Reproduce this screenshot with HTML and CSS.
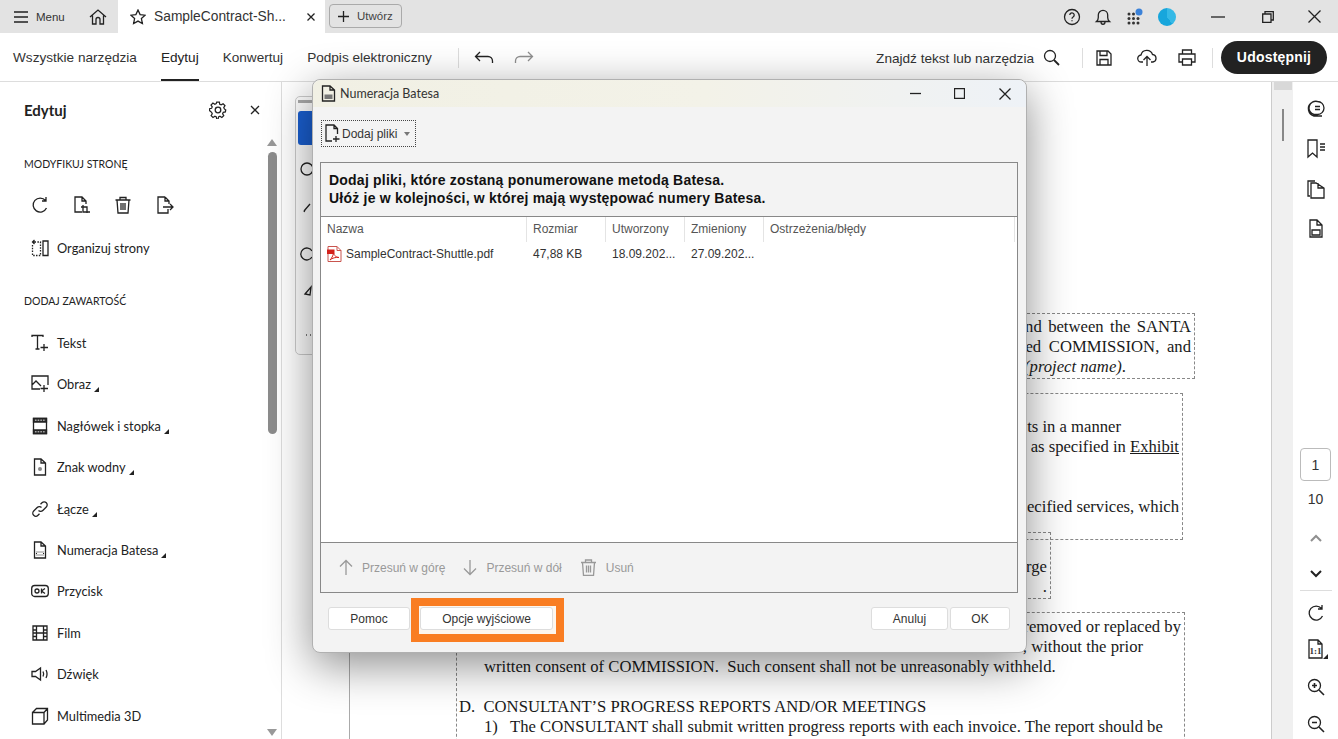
FILE: index.html
```html
<!DOCTYPE html>
<html lang="pl">
<head>
<meta charset="utf-8">
<title>Numeracja Batesa</title>
<link rel="stylesheet" href="styles.css">
</head>
<body>
<div class="app">
  <header class="topbar">
    <div class="menu">
      <svg class="ic" width="16" height="14" viewBox="0 0 16 14"><path d="M1 2h14M1 7h14M1 12h14"/></svg>
      <span>Menu</span>
    </div>
    <svg class="ic home" width="18" height="18" viewBox="0 0 18 18"><path d="M1 9 9 2l8 7M3.500 7.500V16h3.500v-4.500a2 2 0 0 1 4 0V16h3.500V7.500"/></svg>
    <div class="tab">
      <svg class="ic" width="16" height="16" viewBox="0 0 16 16"><path d="m8 1 2.100 4.600 5 .6-3.700 3.400 1 5L8 12.100 3.600 14.600l1-5L.9 6.200l5-.6z"/></svg>
      <span class="tab-name">SampleContract-Sh...</span>
      <svg class="ic" width="10" height="10" viewBox="0 0 10 10"><path d="m1.500 1.500 7 7M8.500 1.500l-7 7"/></svg>
    </div>
    <div class="create">
      <svg class="ic" width="11" height="11" viewBox="0 0 11 11"><path d="M5.500 0v11M0 5.500h11"/></svg>
      <span>Utwórz</span>
    </div>
    <div class="top-right">
      <svg class="ic" width="18" height="18" viewBox="0 0 18 18"><circle cx="9" cy="9" r="7.500"/><path d="M6.800 7a2.200 2.200 0 1 1 3.300 2c-.8.500-1.100.9-1.100 1.700M9 12.200v1"/></svg>
      <svg class="ic" width="18" height="18" viewBox="0 0 18 18"><path d="M2.500 13.500c1.200-1 1.800-2 1.800-4V7a4.700 4.700 0 0 1 9.400 0v2.500c0 2 .6 3 1.800 4zM7 14c0 3 4 3 4 0"/></svg>
      <svg class="apps" width="18" height="18" viewBox="0 0 18 18"><g fill="#333"><circle cx="3" cy="6" r="1.500"/><circle cx="7.500" cy="6" r="1.500"/><circle cx="3" cy="10.500" r="1.500"/><circle cx="7.500" cy="10.500" r="1.500"/><circle cx="12" cy="10.500" r="1.500"/><circle cx="3" cy="15" r="1.500"/><circle cx="7.500" cy="15" r="1.500"/><circle cx="12" cy="15" r="1.500"/></g><circle cx="13" cy="4" r="3.500" fill="#3b82d9"/></svg>
      <span class="avatar"></span>
      <svg class="ic win-min" width="14" height="14" viewBox="0 0 14 14"><path d="M0 7h14"/></svg>
      <svg class="ic win-max" width="12" height="12" viewBox="0 0 12 12"><path d="M.7 3h8.300v8.300H.7zM3 3V.7h8.300V9H9"/></svg>
      <svg class="ic win-close" width="13" height="13" viewBox="0 0 13 13"><path d="m.5.500 12 12M12.500.500l-12 12"/></svg>
    </div>
  </header>

  <nav class="toolbar">
    <a class="tool">Wszystkie narzędzia</a>
    <a class="tool active">Edytuj</a>
    <a class="tool">Konwertuj</a>
    <a class="tool">Podpis elektroniczny</a>
    <span class="vsep first"></span>
    <svg class="ic undo" width="20" height="14" viewBox="0 0 20 14"><path d="M6 1 1.500 5.500 6 10M1.500 5.500H14a4.500 4.500 0 0 1 4.500 4.500v2"/></svg>
    <svg class="ic redo" width="20" height="14" viewBox="0 0 20 14"><path d="M14 1l4.500 4.500L14 10M18.500 5.500H6A4.500 4.500 0 0 0 1.500 10v2"/></svg>
    <div class="tool-right">
      <span class="find">Znajdź tekst lub narzędzia</span>
      <svg class="ic search" width="17" height="17" viewBox="0 0 17 17"><circle cx="7" cy="7" r="5.500"/><path d="m11 11 5 5" stroke-width="1.800"/></svg>
      <span class="vsep s2"></span>
      <svg class="ic save" width="16" height="16" viewBox="0 0 16 16"><path d="M1 1h11l3 3v11H1zM4 1v4.500h7V1M4 15V9.500h8V15"/></svg>
      <svg class="ic upload" width="20" height="18" viewBox="0 0 20 18"><path d="M6 13H4.500a3.500 3.500 0 0 1-.5-7 6 6 0 0 1 11.500-.5 3.800 3.800 0 0 1 .5 7.500h-2M10 17V8M6.500 11 10 7.500l3.500 3.500"/></svg>
      <svg class="ic print" width="18" height="17" viewBox="0 0 18 17"><path d="M4.500 5V1h9v4M4.500 13H1V5h16v8h-3.500M4.500 10h9v6h-9z"/></svg>
      <span class="vsep s3"></span>
      <button class="share">Udostępnij</button>
    </div>
  </nav>

  <main class="workspace">
    <aside class="panel">
      <div class="panel-head">
        <h2>Edytuj</h2>
        <svg class="ic gear" width="18" height="18" viewBox="0 0 18 18"><circle cx="9" cy="9" r="2.800"/><path d="M7.600 1h2.800l.4 2.300 1.500.7 2-1.200 2 2-1.300 2 .7 1.500L17 9.400v-.8l-.3 2.800-2.200.4-.7 1.500 1.200 2-2 2-2-1.300-1.500.7-.4 2.200H7.600l-.4-2.200-1.500-.7-2 1.300-2-2 1.200-2-.7-1.500L0 10v-2l2.200-.4.700-1.500-1.300-2 2-2 2 1.200 1.500-.7z" transform="translate(.5 .1) scale(.95)"/></svg>
        <svg class="ic close-panel" width="10" height="10" viewBox="0 0 10 10"><path d="m1 1 8 8M9 1 1 9"/></svg>
      </div>
      <h3>MODYFIKUJ STRONĘ</h3>
      <div class="page-tools">
        <svg class="ic" width="18" height="18" viewBox="0 0 18 18"><path d="M15.500 12a7 7 0 1 1-1-7.500M15 1v4h-4"/></svg>
        <svg class="ic" width="18" height="18" viewBox="0 0 18 18"><path d="M9 16H2V1h7l4 4v3M9 1v4h4M10 9v7h7M8 11h6v6"/></svg>
        <svg class="ic" width="18" height="18" viewBox="0 0 18 18"><path d="M1.500 4h15M6 4V1.500h6V4M3 4l1 13h10l1-13M7 7v7M9 7v7M11 7v7"/></svg>
        <svg class="ic" width="18" height="18" viewBox="0 0 18 18"><path d="M9 1H2v16h10v-4M9 1l4 4v3M9 1v4h4M7 11h10M14 8l3 3-3 3"/></svg>
      </div>
      <div class="row org">
        <svg class="ic" width="18" height="18" viewBox="0 0 18 18"><path d="M1.500 6v10.500h8V3H6" stroke-dasharray="1.500 1.300"/><path d="M3.500 1 1.500 3l2 2M1.500 3H5"/><path d="M12 2h5v14.500h-5z"/></svg>
        <span>Organizuj strony</span>
      </div>
      <h3 class="second">DODAJ ZAWARTOŚĆ</h3>
      <ul class="items">
        <li class="row"><svg class="ic" width="18" height="18" viewBox="0 0 18 18"><path d="M1 3V1.500h11V3M6.500 1.500V15M4.500 15h4M13 10v7M9.500 13.500H17"/></svg><span>Tekst</span></li>
        <li class="row more"><svg class="ic" width="18" height="18" viewBox="0 0 18 18"><path d="M9 14H1V1h16v9M1 10l4-4 5 5M12 3.500l0 .1M13 10v7M9.500 13.500H17"/></svg><span>Obraz</span></li>
        <li class="row more"><svg class="ic" width="18" height="18" viewBox="0 0 18 18"><path d="M2.500 1.500h13v15h-13z"/><path d="M2.500 1.500h13v3.500h-13zM2.500 13h13v3.500h-13z" fill="#333"/><path d="M4 3.200h10M4 14.800h10" stroke="#ddd" stroke-width="1" stroke-dasharray="1.500 1.200"/></svg><span>Nagłówek i stopka</span></li>
        <li class="row more"><svg class="ic" width="18" height="18" viewBox="0 0 18 18"><path d="M10 1H3.500v16h11V5zM10 1v4h4.500"/><circle cx="9" cy="11" r="2" fill="#888" stroke="none"/></svg><span>Znak wodny</span></li>
        <li class="row more"><svg class="ic" width="18" height="18" viewBox="0 0 18 18"><path d="M7.500 10.500a3 3 0 0 0 4.300 0l3.500-3.500a3 3 0 0 0-4.300-4.300L9.500 4.200M10.500 7.500a3 3 0 0 0-4.300 0L2.700 11a3 3 0 0 0 4.300 4.300l1.500-1.500"/></svg><span>Łącze</span></li>
        <li class="row more"><svg class="ic" width="18" height="18" viewBox="0 0 18 18"><path d="M10 1H3.500v16h11V5zM10 1v4h4.500"/><path d="M5.500 11h7v3h-7z" stroke-width="1" stroke-dasharray="1 1"/></svg><span>Numeracja Batesa</span></li>
        <li class="row"><svg class="ic" width="18" height="18" viewBox="0 0 18 18"><rect x=".7" y="3.500" width="16.600" height="11" rx="3"/><circle cx="6" cy="9" r="2"/><path d="M10.500 6.500v5M14 6.500 10.500 9l3.500 2.500"/></svg><span>Przycisk</span></li>
        <li class="row"><svg class="ic" width="18" height="18" viewBox="0 0 18 18"><path d="M2 2h14v14H2zM5.500 2v14M12.500 2v14M2 6h3.500M2 9h14M2 12.500h3.500M12.500 6H16M12.500 12.500H16"/></svg><span>Film</span></li>
        <li class="row"><svg class="ic" width="18" height="18" viewBox="0 0 18 18"><path d="M1 6.500h3.500L9.500 3v12l-5-3.500H1zM12 6.500c.8 1.500.8 3.500 0 5M15 5c1.300 2.500 1.300 5.500 0 8"/></svg><span>Dźwięk</span></li>
        <li class="row"><svg class="ic" width="18" height="18" viewBox="0 0 18 18"><path d="M1.500 5.500h11.500V17H1.500zM1.500 5.500l4-4h11V13L13 17M13 5.500l3.500-4"/></svg><span>Multimedia 3D</span></li>
      </ul>
      <div class="panel-scroll"><i class="arrow up"></i><b></b><i class="arrow down"></i></div>
    </aside>

    <section class="doc">
      <div class="float-tools">
        <i class="grip"></i>
        <i class="blue"></i>
        <svg class="ic" width="16" height="220" viewBox="0 0 16 220"><circle cx="8" cy="8" r="6"/><path d="m5 50 6-7M5 51l1-2"/><path d="M13 90a6 6 0 1 0 0 6"/><path d="m6 133 6-7-1 8z"/><path d="M7 174h.8M11 174h.8" stroke-width="1.600"/></svg>
      </div>
      <article class="sheet">
        <div class="field f1">
          <p class="spread-a">nd between the SANTA</p>
          <p class="spread">ed COMMISSION, and</p>
          <p class="end-a"><em>(project name)</em>.</p>
        </div>
        <div class="field f2">
          <p class="end-b">ts in a manner</p>
          <p>as specified in <u>Exhibit</u></p>
          <p class="blank"></p>
          <p class="blank"></p>
          <p>ecified services, which</p>
        </div>
        <div class="field f3">
          <p>rge</p>
          <p>.</p>
        </div>
        <div class="field f4">
          <p>removed or replaced by</p>
          <p class="end-c">, without the prior</p>
          <p class="left ind">written consent of COMMISSION.&nbsp; Such consent shall not be unreasonably withheld.</p>
          <p class="blank"></p>
          <p class="left">D.&nbsp; CONSULTANT’S PROGRESS REPORTS AND/OR MEETINGS</p>
          <p class="left ind">1)&nbsp;&nbsp; The CONSULTANT shall submit written progress reports with each invoice. The report should be</p>
        </div>
      </article>
    </section>

    <div class="doc-scroll"><i class="cap"></i><i class="mark"></i></div>

    <aside class="rail">
      <svg class="ic" width="20" height="20" viewBox="0 0 20 20"><path d="M11.500 2.500a6.500 6.500 0 0 1 0 13H8a6.500 6.500 0 0 1 3.500-13zM9 7.500h5M9 10.500h5M5 4a7.500 7.500 0 0 0 3 13h8"/></svg>
      <svg class="ic" width="20" height="20" viewBox="0 0 20 20"><path d="M2 1h9v17l-4.500-4L2 18zM14 5h5M14 8h5M14 11h5"/></svg>
      <svg class="ic" width="20" height="20" viewBox="0 0 20 20"><path d="M4 17H2V2h7M10 4H5v15h13V9zM12 4v5h6"/></svg>
      <svg class="ic" width="20" height="20" viewBox="0 0 20 20"><path d="M11 1H4v17h12V6zM11 1v5h5M6 11h8v5H6z"/></svg>
      <div class="pager">
        <span class="page-box">1</span>
        <span class="page-total">10</span>
        <svg class="ic chev off" width="12" height="8" viewBox="0 0 12 8"><path d="m1 7 5-5 5 5" stroke-width="2"/></svg>
        <svg class="ic chev dn" width="12" height="8" viewBox="0 0 12 8"><path d="m1 1 5 5 5-5" stroke-width="2"/></svg>
        <span class="rule"></span>
        <svg class="ic" width="18" height="18" viewBox="0 0 18 18"><path d="M15.500 12a7 7 0 1 1-1-7.500M15 1v4h-4"/></svg>
        <div class="oneone"><svg class="ic" width="18" height="20" viewBox="0 0 18 20"><path d="M11 1H2v18h13V5zM11 1v4h4"/></svg><span>1:1</span></div>
        <svg class="ic" width="18" height="18" viewBox="0 0 18 18"><circle cx="7.500" cy="7.500" r="6"/><path d="m12 12 5 5M7.500 5v5M5 7.500h5" stroke-width="1.600"/></svg>
        <svg class="ic" width="18" height="18" viewBox="0 0 18 18"><circle cx="7.500" cy="7.500" r="6"/><path d="m12 12 5 5M5 7.500h5" stroke-width="1.600"/></svg>
      </div>
    </aside>
  </main>

  <div class="dialog">
    <div class="dlg-title">
      <svg class="ic" width="15" height="17" viewBox="0 0 15 17"><path d="M9 1H1.500v15h12V5zM9 1v4h4.500" /><path d="M3.500 9.500h8v4.500h-8z" fill="#777" stroke="none"/></svg>
      <span class="dlg-name">Numeracja Batesa</span>
      <svg class="ic d-min" width="11" height="11" viewBox="0 0 11 11"><path d="M0 5.500h11"/></svg>
      <svg class="ic d-max" width="11" height="11" viewBox="0 0 11 11"><path d="M.5.500h10v10H.5z"/></svg>
      <svg class="ic d-close" width="12" height="12" viewBox="0 0 12 12"><path d="m.5.500 11 11M11.500.500l-11 11"/></svg>
    </div>
    <div class="add-row">
      <div class="add-btn">
        <svg class="ic" width="17" height="19" viewBox="0 0 17 19"><path d="M8 17H2V1h8l3.500 3.500V10M10 1v3.500h3.500M12 12v6M9 15h6.500"/></svg>
        <span>Dodaj pliki</span>
        <i class="caret"></i>
      </div>
    </div>
    <div class="dlg-box">
      <div class="intro">
        <p>Dodaj pliki, które zostaną ponumerowane metodą Batesa.</p>
        <p>Ułóż je w kolejności, w której mają występować numery Batesa.</p>
      </div>
      <div class="list">
        <div class="thead">
          <span>Nazwa</span><span>Rozmiar</span><span>Utworzony</span><span>Zmieniony</span><span>Ostrzeżenia/błędy</span>
        </div>
        <div class="tbody">
          <span class="file"><svg width="15" height="16" viewBox="0 0 15 16"><path d="M1 .5h9l4 4v11H1z" fill="#fff" stroke="#c9544e"/><path d="M10 .5v4h4" fill="none" stroke="#c9544e"/><path d="M0 3.500h7.500v4.500H0z" fill="#d3211c"/><path d="M3 14c2-2 4-6 3.500-8.500C6 8 8 11 12 11.500 9 11 5 12 3 14z" fill="none" stroke="#d3211c"/></svg>SampleContract-Shuttle.pdf</span>
          <span>47,88 KB</span><span>18.09.202...</span><span>27.09.202...</span><span></span>
        </div>
      </div>
      <div class="actions">
        <span><svg class="ic" width="14" height="17" viewBox="0 0 14 17"><path d="M7 16V1.500M1 7.500l6-6 6 6"/></svg>Przesuń w górę</span>
        <span><svg class="ic" width="14" height="17" viewBox="0 0 14 17"><path d="M7 1v14.500M1 9.500l6 6 6-6"/></svg>Przesuń w dół</span>
        <span><svg class="ic" width="17" height="17" viewBox="0 0 17 17"><path d="M1 3.500h15M5.500 3.500v-2.500h6v2.500M2.500 3.500l1 13h10l1-13M6.500 6.500v7M8.500 6.500v7M10.500 6.500v7"/></svg>Usuń</span>
      </div>
    </div>
    <div class="dlg-foot">
      <button class="btn help">Pomoc</button>
      <div class="highlight"><button class="btn opts">Opcje wyjściowe</button></div>
      <button class="btn cancel">Anuluj</button>
      <button class="btn ok">OK</button>
    </div>
  </div>
</div>
</body>
</html>
```

FILE: styles.css
```css
* { box-sizing: border-box; }
html, body { margin: 0; height: 100%; overflow: hidden; }
body { font-family: "Liberation Sans", Arial, sans-serif; color: #222; background: #fff; }
p, h2, h3, ul { margin: 0; padding: 0; }
button { font: inherit; }
.ic { fill: none; stroke: #222; stroke-width: 1.3; flex: none; display: block; }

.app { position: relative; width: 1338px; height: 739px; display: flex; flex-direction: column; overflow: hidden; }

/* Top bar */
.topbar { height: 33px; flex: none; background: #e3e3e3; display: flex; align-items: center; position: relative; }
.menu { display: flex; align-items: center; gap: 7px; margin-left: 13px; font-size: 11.5px; color: #333; width: 76px; }
.home { margin-right: 11px; }
.tab { width: 207px; height: 33px; background: #fff; display: flex; align-items: center; padding-left: 12px; font-size: 13.800px; color: #333; }
.tab-name { margin-left: 8px; width: 152px; white-space: nowrap; }
.create { margin-left: 4px; width: 73px; height: 24px; border: 1px solid #aaa; border-radius: 4px; display: flex; align-items: center; gap: 8px; padding-left: 8px; font-size: 11.5px; color: #444; margin-top: -1px; }
.top-right { margin-left: auto; display: flex; align-items: center; gap: 13px; padding-right: 17px; }
.apps { margin-left: 1px; }
.avatar { width: 18px; height: 18px; border-radius: 50%; margin-left: 1px; background: conic-gradient(#35b9e6 0 40%, #17a6dc 40% 100%); background-color: #22aee0; }
.win-min { margin-left: 22px; }
.win-max { margin-left: 24px; }
.win-close { margin-left: 21px; }

/* Tools bar */
.toolbar { height: 49px; flex: none; background: #fff; border-bottom: 1px solid #ddd; display: flex; align-items: stretch; padding-left: 13px; font-size: 13.600px; color: #333; }
.tool { display: flex; align-items: center; margin-right: 24px; height: 48px; padding-top: 3px; border-bottom: 2px solid transparent; white-space: nowrap; }
.tool.active { border-bottom-color: #222; color: #222; }
.vsep { width: 1px; height: 20px; background: #ddd; align-self: center; flex: none; margin-top: 2px; }
.vsep.first { margin-left: 2px; }
.undo { align-self: center; margin: 2px 0 0 15px; }
.redo { align-self: center; margin: 2px 0 0 20px; opacity: .5; }
.tool-right { margin-left: auto; display: flex; align-items: center; padding-right: 11px; }
.tool-right .ic { margin-top: 1px; }
.find { white-space: nowrap; padding-top: 2px; }
.tool-right .search { margin-left: 9px; }
.s2 { margin-left: 22px; }
.tool-right .save { margin-left: 13px; }
.tool-right .upload { margin-left: 25px; }
.tool-right .print { margin-left: 21px; }
.s3 { margin-left: 16px; }
.share { margin-left: 8px; width: 106px; height: 33px; border: 0; border-radius: 17px; background: #222; color: #fff; font-weight: 700; font-size: 14px; letter-spacing: .2px; }

/* Workspace */
.workspace { flex: 1; display: flex; min-height: 0; }
.panel { width: 282px; flex: none; border-right: 1px solid #ddd; position: relative; padding: 0 0 0 24px; font-family: Lato, sans-serif; font-size: 12.800px; color: #222; }
.panel-head { height: 56px; display: flex; align-items: center; }
.panel-head h2 { font-size: 15px; font-weight: 700; width: 185px; }
.close-panel { margin-left: 23px; }
.panel h3 { font-size: 10.500px; font-weight: 400; letter-spacing: 0; color: #222; margin-top: 18px; line-height: 16px; }
.panel h3.second { margin-top: 25px; }
.page-tools { display: flex; gap: 23.500px; margin: 24px 0 0 7px; }
.row { display: flex; align-items: center; gap: 8px; margin-left: 7px; height: 41.400px; list-style: none; position: relative; white-space: nowrap; }
.row.org { margin-top: 13px; }
.items { list-style: none; margin-top: 13px; }
.row.more span::after { content: ""; display: inline-block; width: 0; height: 0; margin-left: 3px; border-style: solid; border-width: 0 0 5px 5px; border-color: transparent transparent #222 transparent; vertical-align: -3px; }
.panel-scroll { position: absolute; right: 4px; top: 57px; bottom: 3px; width: 10px; display: flex; flex-direction: column; align-items: center; }
.panel-scroll b { width: 9px; height: 282px; margin-top: 6px; background: #8c8c8c; border-radius: 5px; }
.arrow { width: 0; height: 0; border-left: 5px solid transparent; border-right: 5px solid transparent; }
.arrow.up { border-bottom: 7px solid #999; }
.arrow.down { border-top: 7px solid #999; margin-top: auto; }

/* Document */
.doc { flex: 1; position: relative; overflow: hidden; background: #fff; font-family: "Liberation Serif", serif; font-size: 16.650px; line-height: 20px; color: #1a1a1a; }
.float-tools { position: absolute; left: 13px; top: 14px; width: 50px; height: 259px; border: 1px solid #ccc; border-radius: 5px; padding: 3px 2px; background: #fff; }
.grip { display: block; width: 40px; height: 3px; background: #aaa; margin-bottom: 8px; }
.blue { display: block; width: 40px; height: 34px; background: #1a5fd0; border-radius: 3px; margin-bottom: 16px; }
.float-tools .ic { margin-left: 1px; }
.sheet { position: absolute; left: 67px; top: 0; bottom: 0; right: 0; border-left: 1px solid #aaa; }
.field { position: absolute; border: 1px dashed #888; text-align: right; white-space: nowrap; }
.field p { min-height: 20px; }
.f1 { left: 107px; top: 231px; width: 738px; height: 66px; padding: 3px 3px 0 0; }
.f2 { left: 107px; top: 311px; width: 726px; height: 147px; padding: 23px 3px 0 0; }
.f3 { left: 107px; top: 450px; width: 594px; height: 67px; padding: 24px 3px 0 0; }
.f4 { left: 106px; top: 530px; width: 729px; height: 140px; padding: 4px 3px 0 2px; }
.spread-a { word-spacing: 2.300px; }
.spread { word-spacing: 3.500px; }
.end-a { padding-right: 65px; }
.end-b { padding-right: 58px; }
.end-c { padding-right: 38px; }
.left { text-align: left; }
.ind { padding-left: 25px; }

.doc-scroll { width: 22px; flex: none; background: #f0f0f0; border-left: 1px solid #ccc; position: relative; display: flex; flex-direction: column; align-items: center; }
.cap { width: 18px; height: 8px; background: #d8d8d8; }
.mark { width: 2px; height: 32px; background: #888; margin-top: 19px; }

.rail { width: 46px; flex: none; background: #fff; border-left: 1px solid #ddd; margin-left: -1px; display: flex; flex-direction: column; align-items: center; padding-top: 17px; gap: 20px; }
.pager { margin-top: 189px; display: flex; flex-direction: column; align-items: center; font-size: 14px; color: #333; }
.page-box { width: 31px; height: 33px; border: 1px solid #bbb; border-radius: 4px; display: flex; align-items: center; justify-content: center; }
.page-total { margin-top: 9px; line-height: 18px; }
.chev.off { margin-top: 26px; opacity: .5; }
.dn { margin-top: 28px; }
.rule { width: 32px; height: 1px; background: #ddd; margin: 12px 0 13px; }
.oneone { position: relative; margin-top: 17px; }
.oneone::after { content: ""; position: absolute; right: -3px; bottom: 0; border-style: solid; border-width: 0 0 5px 5px; border-color: transparent transparent #222 transparent; }
.oneone span { position: absolute; left: 3px; top: 7px; font: 700 9px "Liberation Serif", serif; }
.pager > .ic:nth-last-child(1), .pager > .ic:nth-last-child(2) { margin-top: 19px; }

/* Dialog */
.dialog { position: absolute; left: 312px; top: 79px; width: 715px; height: 574px; background: #f3f3f3; border: 1px solid #b0b0b0; border-radius: 8px; box-shadow: 0 12px 45px rgba(0,0,0,.45); display: flex; flex-direction: column; font-size: 12px; color: #333; }
.dlg-title { height: 27px; flex: none; display: flex; align-items: center; padding-left: 8px; border-radius: 8px 8px 0 0; background: linear-gradient(90deg, #f1f0e4 0%, #f3f2e8 55%, #eef2f7 100%); }
.dlg-name { margin-left: 4px; font-family: Lato, sans-serif; font-size: 12.500px; width: 570px; }
.d-max { margin-left: 33px; }
.d-close { margin-left: 34px; }
.add-row { height: 55px; flex: none; padding: 13px 0 0 9px; }
.add-btn { width: 95px; height: 27px; border: 1px dotted #444; display: flex; align-items: center; padding-left: 2px; margin-left: -1px; }
.add-btn span { margin-left: 1px; }
.caret { margin-left: 7px; border-left: 3.500px solid transparent; border-right: 3.500px solid transparent; border-top: 4px solid #777; }
.dlg-box { margin: 0 8px 0 7px; height: 431px; flex: none; border: 1px solid #888; display: flex; flex-direction: column; }
.intro { height: 54px; flex: none; border-bottom: 1px solid #888; padding: 8px 0 0 8px; font: 700 14px/18px "Liberation Sans", sans-serif; color: #111; letter-spacing: .22px; white-space: nowrap; }
.list { height: 326px; flex: none; background: #fff; border-bottom: 1px solid #888; }
.thead, .tbody { display: grid; grid-template-columns: 206px 79px 79px 79px 251px; }
.thead { height: 25px; }
.thead span { padding-left: 6px; line-height: 25px; border-right: 1px solid #e4e4e4; color: #555; }
.tbody { height: 23px; align-items: center; }
.tbody span { padding-left: 6px; white-space: nowrap; }
.file { display: flex; align-items: center; gap: 4px; }
.file svg { flex: none; }
.actions { flex: 1; display: flex; align-items: center; padding: 0 0 0 18px; gap: 18px; color: #999; }
.actions span { display: flex; align-items: center; gap: 9px; }
.actions .ic { stroke: #999; }
.dlg-foot { flex: 1; display: flex; align-items: flex-start; padding: 0 0 0 15px; }
.btn { height: 23px; background: #fff; border: 1px solid #ddd; border-radius: 3px; color: #333; font-size: 12px; padding: 0; }
.help { width: 82px; margin-top: 14px; }
.highlight { margin-left: 1px; margin-top: 5px; width: 153px; height: 44px; border: 8px solid #f97d22; padding: 1px; background: #fdf6ee; }
.opts { display: block; width: 133px; }
.cancel { width: 77px; margin: 14px 0 0 307px; }
.ok { width: 60px; margin: 14px 0 0 2px; }
```
